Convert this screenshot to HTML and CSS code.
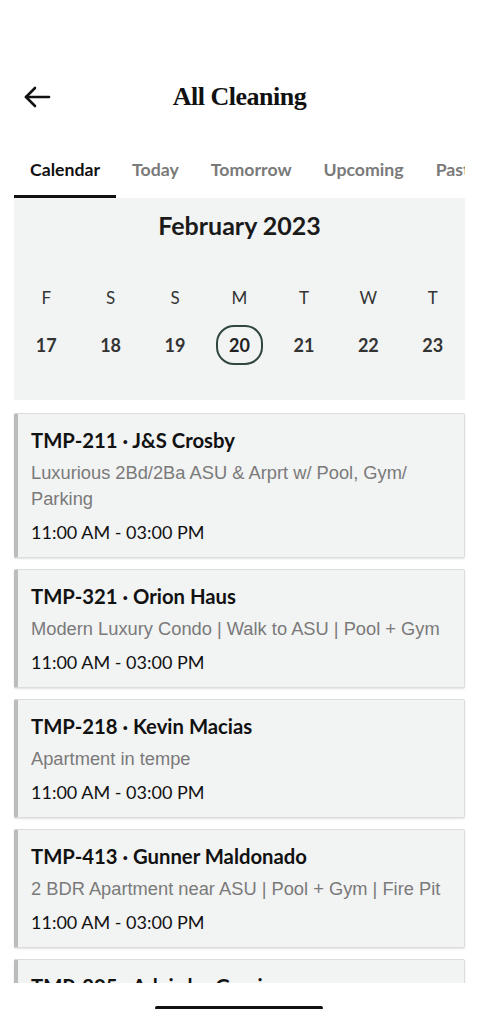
FILE: index.html
```html
<!DOCTYPE html>
<html lang="en">
<head>
    <meta charset="UTF-8">
    <meta name="viewport" content="width=device-width, initial-scale=1.0">
    <title>All Cleaning</title>
    <link rel="stylesheet" href="styles.css">
</head>
<body>
    <div class="screen">
        <header class="topbar">
            <a class="back" href="#">
                <svg width="28" height="24" viewBox="0 0 28 24" fill="none" stroke="#111" stroke-width="2.6" stroke-linecap="round" stroke-linejoin="round">
                    <path d="M26 12H3"/>
                    <path d="M12 3L3 12l9 9"/>
                </svg>
            </a>
            <h1>All Cleaning</h1>
        </header>

        <nav class="tabs">
            <a class="tab active" href="#">Calendar</a>
            <a class="tab" href="#">Today</a>
            <a class="tab" href="#">Tomorrow</a>
            <a class="tab" href="#">Upcoming</a>
            <a class="tab" href="#">Past</a>
        </nav>

        <section class="calendar">
            <h2>February 2023</h2>
            <div class="week">
                <span class="dow">F</span>
                <span class="dow">S</span>
                <span class="dow">S</span>
                <span class="dow">M</span>
                <span class="dow">T</span>
                <span class="dow">W</span>
                <span class="dow">T</span>
                <span class="day">17</span>
                <span class="day">18</span>
                <span class="day">19</span>
                <span class="day selected">20</span>
                <span class="day">21</span>
                <span class="day">22</span>
                <span class="day">23</span>
            </div>
        </section>

        <div class="list">
            <div class="card">
                <h3>TMP-211 · J&amp;S Crosby</h3>
                <p class="listing">Luxurious 2Bd/2Ba ASU &amp; Arprt w/ Pool, Gym/ Parking</p>
                <p class="time">11:00 AM - 03:00 PM</p>
            </div>
            <div class="card">
                <h3>TMP-321 · Orion Haus</h3>
                <p class="listing">Modern Luxury Condo | Walk to ASU | Pool + Gym</p>
                <p class="time">11:00 AM - 03:00 PM</p>
            </div>
            <div class="card">
                <h3>TMP-218 · Kevin Macias</h3>
                <p class="listing">Apartment in tempe</p>
                <p class="time">11:00 AM - 03:00 PM</p>
            </div>
            <div class="card">
                <h3>TMP-413 · Gunner Maldonado</h3>
                <p class="listing">2 BDR Apartment near ASU | Pool + Gym | Fire Pit</p>
                <p class="time">11:00 AM - 03:00 PM</p>
            </div>
            <div class="card">
                <h3>TMP-205 · Adeirdre Garcia</h3>
            </div>
        </div>
    </div>
    <div class="home-bar"></div>
</body>
</html>
```

FILE: styles.css
```css
body {
    font-family: 'Lato', 'Noto Sans', sans-serif;
    margin: 0;
    padding: 0;
    background-color: #fff;
    color: #111;
}

.screen {
    height: 983px;
    overflow: hidden;
    padding: 0 13px 0 14px;
}

.topbar {
    display: flex;
    align-items: center;
    height: 76px;
    margin-top: 59px;
}

.back {
    display: flex;
    margin-left: 9px;
}

.topbar h1 {
    flex: 1;
    margin: 0 0 0 -37px;
    text-align: center;
    font-family: 'Liberation Serif', serif;
    font-size: 26px;
    font-weight: bold;
    letter-spacing: -0.5px;
    color: #111;
}

.tabs {
    display: flex;
    overflow: hidden;
    white-space: nowrap;
    height: 55px;
    padding-top: 8px;
}

.tab {
    display: flex;
    align-items: center;
    padding: 0 16px;
    font-size: 17.7px;
    font-weight: bold;
    color: #7a7a7a;
    text-decoration: none;
    border-bottom: 3px solid transparent;
}

.tab.active {
    color: #111;
    border-bottom-color: #111;
}

.calendar {
    background-color: #f2f3f3;
    height: 202px;
    padding-top: 12px;
    box-sizing: border-box;
}

.calendar h2 {
    margin: 0;
    text-align: center;
    font-size: 25px;
    font-weight: bold;
    color: #1a1a1a;
}

.week {
    display: grid;
    grid-template-columns: repeat(7, 1fr);
    grid-template-rows: 48px 48px;
    align-items: center;
    justify-items: center;
    margin-top: 33px;
    color: #333;
}

.dow {
    font-size: 17px;
}

.day {
    font-size: 18px;
    font-weight: bold;
    width: 43px;
    height: 36px;
    display: flex;
    align-items: center;
    justify-content: center;
    border: 2px solid transparent;
    border-radius: 18px;
}

.day.selected {
    border-color: #2f473e;
    color: #222;
}

.list {
    display: flex;
    flex-direction: column;
    gap: 11px;
    margin-top: 13px;
}

.card {
    background-color: #f2f3f3;
    border: 1px solid #dcdddd;
    border-left: 4px solid #bcbcbc;
    border-radius: 2px;
    box-shadow: 0 1px 2px rgba(0, 0, 0, 0.12);
    padding: 13px 16px 12px 13px;
}

.card h3 {
    margin: 0;
    font-size: 20.3px;
    font-weight: bold;
    line-height: 26px;
    color: #111;
}

.card p {
    margin: 0;
}

.card .listing {
    margin-top: 7px;
    font-family: 'Liberation Sans', 'Noto Sans', sans-serif;
    font-size: 18.3px;
    line-height: 26px;
    color: #7a7a7a;
}

.card .time {
    margin-top: 7px;
    font-size: 18px;
    line-height: 26px;
    color: #111;
}

.home-bar {
    width: 168px;
    height: 4px;
    margin: 23px auto 0;
    background-color: #111;
    border-radius: 2px;
}
```
